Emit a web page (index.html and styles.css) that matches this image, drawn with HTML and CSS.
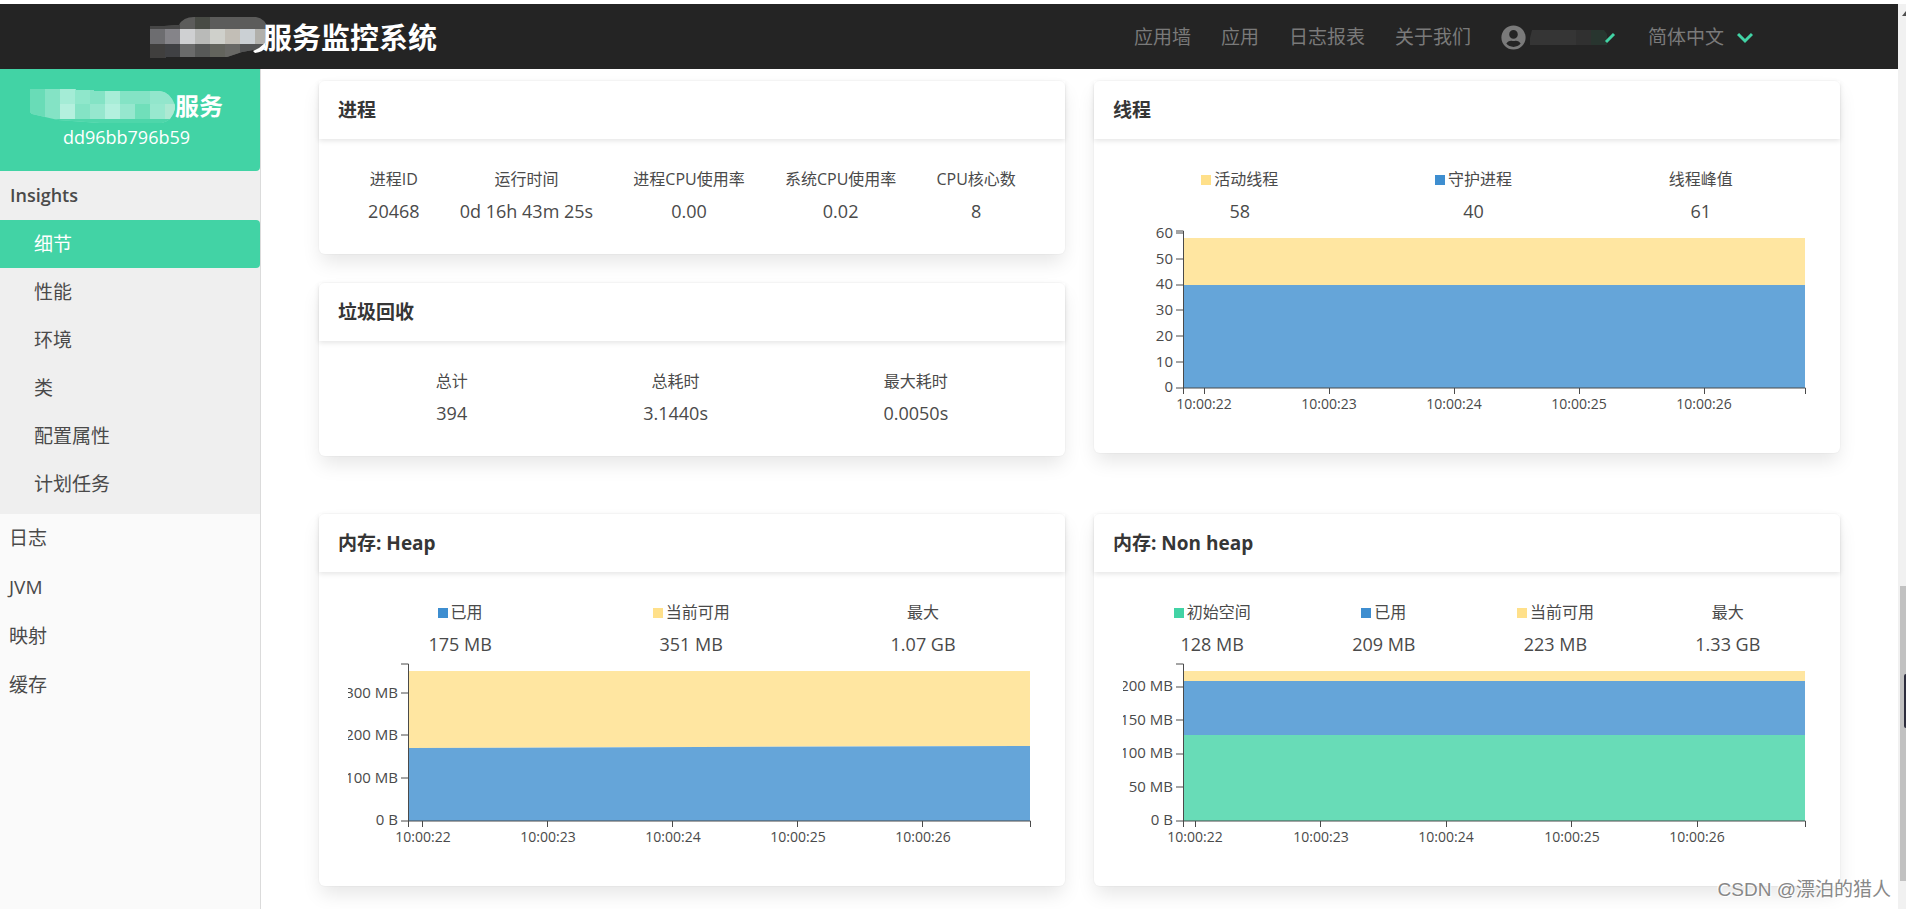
FILE: index.html
```html
<!DOCTYPE html>
<html lang="zh-CN">
<head>
<meta charset="utf-8">
<title>服务监控系统</title>
<link rel="stylesheet" href="styles.css">
</head>
<body>
<div class="page">
  <header class="navbar">
    <div class="brand">
      <svg class="brand-mask" viewBox="0 0 119 42" aria-hidden="true">
        <defs><clipPath id="brandClip"><path d="M0 9H14L29 8Q33 0 44 0H106Q115 1 119 13V20Q116 30 108 32L92 35L77 40H16V41H0Z"/></clipPath></defs>
        <g clip-path="url(#brandClip)">
          <rect width="119" height="42" fill="#5c5c5b"/>
          <rect x="0" y="0" width="30" height="12" fill="#464646"/>
          <rect x="45" y="0" width="15" height="12" fill="#484b45"/>
          <rect x="0" y="12" width="15" height="15" fill="#6d6d70"/>
          <rect x="15" y="12" width="15" height="15" fill="#858489"/>
          <rect x="30" y="12" width="15" height="15" fill="#cfd0d2"/>
          <rect x="45" y="12" width="15" height="15" fill="#b9bab8"/>
          <rect x="60" y="12" width="15" height="15" fill="#cfd0cb"/>
          <rect x="75" y="12" width="15" height="15" fill="#c2beb6"/>
          <rect x="90" y="12" width="15" height="15" fill="#cbd0d4"/>
          <rect x="105" y="12" width="14" height="15" fill="#b1b0ab"/>
          <rect x="0" y="27" width="15" height="15" fill="#403f3e"/>
          <rect x="15" y="27" width="15" height="15" fill="#404144"/>
          <rect x="30" y="27" width="15" height="15" fill="#6a6b6b"/>
          <rect x="45" y="27" width="15" height="15" fill="#575958"/>
          <rect x="60" y="27" width="15" height="15" fill="#63645d"/>
          <rect x="75" y="27" width="15" height="15" fill="#686865"/>
          <rect x="90" y="27" width="29" height="15" fill="#535455"/>
        </g>
        <path fill="#fff" d="M103 34L109 31L115 26V31Q113 35 105 36Z"/>
      </svg>
      <span class="brand-name">服务监控系统</span>
    </div>
    <nav class="menu">
      <a href="#">应用墙</a>
      <a href="#">应用</a>
      <a href="#">日志报表</a>
      <a href="#">关于我们</a>
      <button type="button" class="user" aria-label="用户">
        <svg class="avatar" viewBox="0 0 496 512" aria-hidden="true"><path fill="currentColor" d="M248 8C111 8 0 119 0 256s111 248 248 248 248-111 248-248S385 8 248 8zm0 96c48.600 0 88 39.400 88 88s-39.400 88-88 88-88-39.400-88-88 39.400-88 88-88zm0 344c-58.700 0-111.300-26.600-146.500-68.200 18.800-35.400 55.600-59.800 98.500-59.800 2.400 0 4.800.4 7.100 1.100 13 4.200 26.600 6.900 40.900 6.900 14.300 0 28-2.700 40.900-6.900 2.300-.7 4.700-1.100 7.100-1.100 42.900 0 79.700 24.400 98.500 59.800C359.300 421.400 306.700 448 248 448z"/></svg>
        <svg class="user-mask" viewBox="0 0 86 16" aria-hidden="true">
          <path fill="#353535" d="M2 0H61V15H0V8Z"/>
          <path fill="#303030" d="M46 0H61V15H46Z"/>
          <path fill="#28352f" d="M61 0H74L77 4V15H61Z"/>
          <path stroke="#42d3a5" stroke-width="3" fill="none" d="M76 12L84 4"/>
        </svg>
      </button>
      <button type="button" class="lang">简体中文
        <svg class="chevron" viewBox="0 0 16 12" aria-hidden="true"><path fill="none" stroke="#42d3a5" stroke-width="3" d="M1 2L8 9L15 2"/></svg>
      </button>
    </nav>
  </header>

  <div class="body">
    <aside class="sidebar">
      <div class="instance">
        <div class="instance-name">
          <svg class="instance-mask" viewBox="0 0 145 34" aria-hidden="true">
            <defs><clipPath id="instanceClip"><path d="M0 0H46V1H64V2H130Q140 3 145 16V20Q142 32 132 34H70L28 31L2 25Q0 24 0 22Z"/></clipPath></defs>
            <g clip-path="url(#instanceClip)">
              <rect width="145" height="34" fill="#84e3c5"/>
              <rect width="15" height="34" fill="#69dcb7"/>
              <rect x="30" width="15" height="15" fill="#a4ecd6"/>
              <rect x="45" width="15" height="15" fill="#8fe7cb"/>
              <rect x="75" width="15" height="15" fill="#a7edd7"/>
              <rect x="120" width="25" height="15" fill="#92e6cc"/>
              <rect x="30" y="15" width="15" height="15" fill="#b4f0de"/>
              <rect x="60" y="15" width="15" height="15" fill="#96e7ce"/>
              <rect x="75" y="15" width="15" height="15" fill="#b3f0de"/>
              <rect x="90" y="15" width="15" height="15" fill="#96e7ce"/>
              <rect x="105" y="15" width="15" height="15" fill="#70dfba"/>
              <rect x="120" y="15" width="15" height="15" fill="#98e8cf"/>
              <rect x="135" y="15" width="10" height="15" fill="#ade9d3"/>
              <rect y="30" width="145" height="4" fill="#4ed6aa"/>
            </g>
          </svg>
          <span>服务</span>
        </div>
        <div class="instance-id">dd96bb796b59</div>
      </div>
      <div class="group">
        <a class="group-title" href="#">Insights</a>
        <ul class="sublist">
          <li><a class="active" href="#">细节</a></li>
          <li><a href="#">性能</a></li>
          <li><a href="#">环境</a></li>
          <li><a href="#">类</a></li>
          <li><a href="#">配置属性</a></li>
          <li><a href="#">计划任务</a></li>
        </ul>
      </div>
      <ul class="toplist">
        <li><a href="#">日志</a></li>
        <li><a href="#">JVM</a></li>
        <li><a href="#">映射</a></li>
        <li><a href="#">缓存</a></li>
      </ul>
    </aside>

    <main class="main">
      <div class="row">
        <div class="stack">
          <section class="card">
            <h2>进程</h2>
            <div class="card-body">
              <dl class="stats">
                <div><dt>进程ID</dt><dd>20468</dd></div>
                <div><dt>运行时间</dt><dd>0d 16h 43m 25s</dd></div>
                <div><dt>进程CPU使用率</dt><dd>0.00</dd></div>
                <div><dt>系统CPU使用率</dt><dd>0.02</dd></div>
                <div><dt>CPU核心数</dt><dd>8</dd></div>
              </dl>
            </div>
          </section>
          <section class="card">
            <h2>垃圾回收</h2>
            <div class="card-body">
              <dl class="stats">
                <div><dt>总计</dt><dd>394</dd></div>
                <div><dt>总耗时</dt><dd>3.1440s</dd></div>
                <div><dt>最大耗时</dt><dd>0.0050s</dd></div>
              </dl>
            </div>
          </section>
        </div>
        <section class="card">
          <h2>线程</h2>
          <div class="card-body">
            <dl class="stats">
              <div><dt><i class="swatch yellow"></i>活动线程</dt><dd>58</dd></div>
              <div><dt><i class="swatch blue"></i>守护进程</dt><dd>40</dd></div>
              <div><dt>线程峰值</dt><dd>61</dd></div>
            </dl>
            <svg class="chart" viewBox="0 0 688 199">
              <path class="area-yellow" d="M60 12H682V59H60Z"/>
              <path class="area-blue" d="M60 59H682V162H60Z"/>
              <path class="axis" d="M53 5H60.500V162H53M53 7H60M53 33H60M53 59H60M53 84H60M53 110H60M53 136H60"/>
              <path class="axis" d="M60.500 168V162H682.500V168M81.500 162V168M206.500 162V168M331.500 162V168M456.500 162V168M581.500 162V168"/>
              <g class="y-labels">
                <text x="50" y="12">60</text><text x="50" y="38">50</text><text x="50" y="63">40</text><text x="50" y="89">30</text><text x="50" y="115">20</text><text x="50" y="141">10</text><text x="50" y="166">0</text>
              </g>
              <g class="x-labels">
                <text x="81" y="183">10:00:22</text><text x="206" y="183">10:00:23</text><text x="331" y="183">10:00:24</text><text x="456" y="183">10:00:25</text><text x="581" y="183">10:00:26</text>
              </g>
            </svg>
          </div>
        </section>
      </div>

      <div class="row">
        <section class="card">
          <h2>内存: Heap</h2>
          <div class="card-body">
            <dl class="stats">
              <div><dt><i class="swatch blue"></i>已用</dt><dd>175 MB</dd></div>
              <div><dt><i class="swatch yellow"></i>当前可用</dt><dd>351 MB</dd></div>
              <div><dt>最大</dt><dd>1.07 GB</dd></div>
            </dl>
            <svg class="chart" viewBox="0 0 688 199">
              <path class="area-yellow" d="M60 12H682V87L60 89Z"/>
              <path class="area-blue" d="M60 89L682 87V162H60Z"/>
              <path class="axis" d="M53 5H60.500V162H53M53 34H60M53 76H60M53 119H60"/>
              <path class="axis" d="M60.500 168V162H682.500V168M74.500 162V168M199.500 162V168M324.500 162V168M449.500 162V168M574.500 162V168"/>
              <g class="y-labels">
                <text x="50" y="39">300 MB</text><text x="50" y="81">200 MB</text><text x="50" y="124">100 MB</text><text x="50" y="166">0 B</text>
              </g>
              <g class="x-labels">
                <text x="75" y="183">10:00:22</text><text x="200" y="183">10:00:23</text><text x="325" y="183">10:00:24</text><text x="450" y="183">10:00:25</text><text x="575" y="183">10:00:26</text>
              </g>
            </svg>
          </div>
        </section>
        <section class="card">
          <h2>内存: Non heap</h2>
          <div class="card-body">
            <dl class="stats">
              <div><dt><i class="swatch green"></i>初始空间</dt><dd>128 MB</dd></div>
              <div><dt><i class="swatch blue"></i>已用</dt><dd>209 MB</dd></div>
              <div><dt><i class="swatch yellow"></i>当前可用</dt><dd>223 MB</dd></div>
              <div><dt>最大</dt><dd>1.33 GB</dd></div>
            </dl>
            <svg class="chart" viewBox="0 0 688 199">
              <path class="area-yellow" d="M60 12H682V22H60Z"/>
              <path class="area-blue" d="M60 22H682V76H60Z"/>
              <path class="area-green" d="M60 76H682V162H60Z"/>
              <path class="axis" d="M53 5H60.500V162H53M53 28H60M53 61H60M53 95H60M53 128H60"/>
              <path class="axis" d="M60.500 168V162H682.500V168M72.500 162V168M197.500 162V168M323.500 162V168M448.500 162V168M574.500 162V168"/>
              <g class="y-labels">
                <text x="50" y="32">200 MB</text><text x="50" y="66">150 MB</text><text x="50" y="99">100 MB</text><text x="50" y="133">50 MB</text><text x="50" y="166">0 B</text>
              </g>
              <g class="x-labels">
                <text x="72" y="183">10:00:22</text><text x="198" y="183">10:00:23</text><text x="323" y="183">10:00:24</text><text x="449" y="183">10:00:25</text><text x="574" y="183">10:00:26</text>
              </g>
            </svg>
          </div>
        </section>
      </div>
    </main>
  </div>
</div>
<div class="scrollbar" aria-hidden="true">
  <svg class="scroll-arrow" viewBox="0 0 8 6"><path fill="#505050" d="M4 6L8 1V6Z"/></svg>
  <div class="thumb"></div>
  <div class="grip"></div>
</div>
<div class="watermark">CSDN @漂泊的猎人</div>
</body>
</html>
```
FILE: styles.css
```css
* { box-sizing: border-box; }

body {
  margin: 0;
  padding-top: 4px;
  height: 100vh;
  overflow: hidden;
  display: flex;
  background: #fff;
  color: #4a4a4a;
  font-family: "Open Sans", "Noto Sans CJK SC", sans-serif;
  font-size: 18px;
  line-height: 29px;
}

a { color: inherit; text-decoration: none; }
ul, dl, dd { margin: 0; padding: 0; list-style: none; }
button { padding: 0; border: 0; background: none; color: inherit; font: inherit; }

.page { flex: 1; min-width: 0; display: flex; flex-direction: column; }

.navbar {
  flex: none;
  display: flex;
  align-items: center;
  justify-content: space-between;
  min-height: 65px;
  padding: 2px 145px 0 150px;
  background: #242424;
}
.brand { display: flex; align-items: center; }
.brand-mask { width: 119px; height: 42px; }
.brand-name {
  margin-left: -6px;
  color: #fff;
  font-size: 29px;
  font-weight: 700;
  line-height: 42px;
}
.menu {
  display: flex;
  align-items: center;
  gap: 30px;
  color: #7a7a7a;
  font-size: 19px;
}
.user { display: flex; align-items: center; gap: 4px; }
.avatar { width: 25px; height: 25px; }
.user-mask { width: 86px; height: 16px; }
.lang { display: flex; align-items: center; gap: 13px; margin-left: 2px; }
.chevron { width: 16px; height: 12px; }

.body { flex: 1; min-height: 0; display: flex; }

.sidebar {
  flex: none;
  width: 261px;
  border-right: 1px solid #dbdbdb;
  background: #fafafa;
  font-size: 19px;
}
.instance {
  min-height: 102px;
  padding: 20px 7px 0 0;
  border-radius: 0 0 4px 0;
  background: #42d3a5;
  color: #fff;
  text-align: center;
}
.instance-name {
  display: flex;
  align-items: center;
  justify-content: center;
  font-size: 24px;
  font-weight: 700;
  line-height: 34px;
}
.instance-mask { width: 145px; height: 34px; }
.instance-id { font-size: 18px; }
.group { padding-bottom: 6px; background: #efefef; }
.group-title {
  display: block;
  padding-left: 10px;
  font-size: 18px;
  font-weight: 600;
  line-height: 49px;
}
.sublist a { display: block; padding-left: 34px; border-radius: 0 4px 4px 0; line-height: 48px; }
.sublist .active { background: #42d3a5; color: #fff; }
.toplist a { display: block; padding-left: 9px; line-height: 49px; }

.main {
  flex: 1;
  min-width: 0;
  display: flex;
  flex-direction: column;
  gap: 58px;
  padding: 12px 58px 0;
}
.row {
  display: grid;
  grid-template-columns: repeat(2, minmax(0, 1fr));
  gap: 29px;
  align-items: start;
}
.stack { display: grid; gap: 29px; }

.card {
  border-radius: 6px;
  background: #fff;
  box-shadow: 0 10px 19px -2px rgba(10, 10, 10, 0.1), 0 0 0 1px rgba(10, 10, 10, 0.02);
}
.card h2 {
  margin: 0;
  padding: 15px 19px 14px;
  color: #363636;
  font-size: 19px;
  font-weight: 700;
  line-height: 29px;
  box-shadow: 0 2px 5px rgba(10, 10, 10, 0.1);
}
.card-body { padding: 29px 29px 28px; }

.stats { display: flex; text-align: center; }
.stats > div { flex: 1 1 auto; }
.stats dt {
  margin-bottom: 7px;
  font-size: 16px;
  line-height: 22px;
}
.stats dd { font-size: 18px; line-height: 29px; }
.swatch { display: inline-block; width: 10px; height: 10px; margin-right: 3px; }
.swatch.yellow { background: #ffe08a; }
.swatch.blue { background: #3e8ed0; }
.swatch.green { background: #42d3a5; }

.chart {
  display: block;
  width: 100%;
  height: auto;
  overflow: visible;
  clip-path: inset(-8px 0 0 0);
}
.area-yellow { fill: #ffe6a1; }
.area-blue { fill: #65a5d9; }
.area-green { fill: #68dcb7; }
.axis { fill: none; stroke: #4a4a4a; stroke-width: 1px; }
.chart text { fill: #4a4a4a; }
.y-labels { font-size: 15px; text-anchor: end; }
.x-labels { font-size: 14px; text-anchor: middle; }

.scrollbar { position: relative; flex: none; width: 8px; background: #f1f1f1; }
.scroll-arrow { display: block; width: 8px; height: 6px; margin-top: 6px; }
.thumb { position: absolute; top: 64%; right: 0; bottom: 28px; width: 6px; margin-top: 3px; background: #c1c1c1; }
.grip {
  position: absolute;
  top: 74%;
  right: 0;
  width: 2px;
  height: 6%;
  border-radius: 2px 0 0 2px;
  background: #2e2e3e;
}

.watermark {
  position: absolute;
  right: 15px;
  bottom: 5px;
  color: #888;
  font-family: "Liberation Sans", "Noto Sans CJK SC", sans-serif;
  font-size: 19px;
  text-shadow: 1px 1px 1px #fff, -1px -1px 1px #fff;
}
```
